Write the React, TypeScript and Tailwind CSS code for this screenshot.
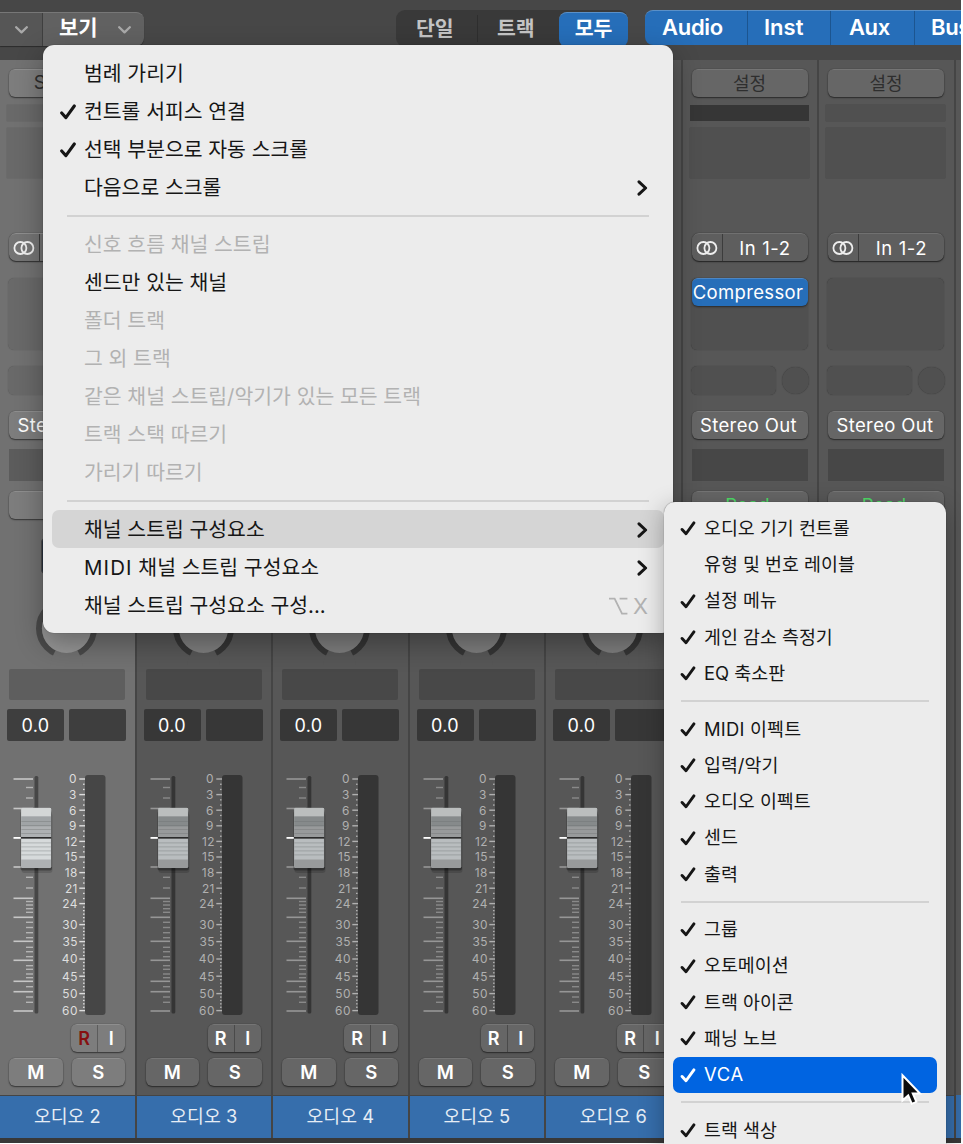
import React from "react";
import { clsx } from "clsx";

interface MenuEntry {
  label?: string;
  checked?: boolean;
  disabled?: boolean;
  submenu?: boolean;
  active?: boolean;
  shortcut?: string;
  separator?: boolean;
}

interface Channel {
  name: string;
  setting: string;
  selected?: boolean;
  gainActive?: boolean;
  plugin?: string;
}

const CHANNELS: Channel[] = [
  { name: "오디오 2", setting: "Setting", selected: true },
  { name: "오디오 3", setting: "설정" },
  { name: "오디오 4", setting: "설정" },
  { name: "오디오 5", setting: "설정" },
  { name: "오디오 6", setting: "설정" },
  { name: "오디오 7", setting: "설정", gainActive: true, plugin: "Compressor" },
  { name: "오디오 8", setting: "설정" },
];

const VIEW_MENU: MenuEntry[] = [
  { label: "범례 가리기" },
  { label: "컨트롤 서피스 연결", checked: true },
  { label: "선택 부분으로 자동 스크롤", checked: true },
  { label: "다음으로 스크롤", submenu: true },
  { separator: true },
  { label: "신호 흐름 채널 스트립", disabled: true },
  { label: "센드만 있는 채널" },
  { label: "폴더 트랙", disabled: true },
  { label: "그 외 트랙", disabled: true },
  { label: "같은 채널 스트립/악기가 있는 모든 트랙", disabled: true },
  { label: "트랙 스택 따르기", disabled: true },
  { label: "가리기 따르기", disabled: true },
  { separator: true },
  { label: "채널 스트립 구성요소", submenu: true, active: true },
  { label: "MIDI 채널 스트립 구성요소", submenu: true },
  { label: "채널 스트립 구성요소 구성...", shortcut: "X" },
];

const COMPONENT_MENU: MenuEntry[] = [
  { label: "오디오 기기 컨트롤", checked: true },
  { label: "유형 및 번호 레이블" },
  { label: "설정 메뉴", checked: true },
  { label: "게인 감소 측정기", checked: true },
  { label: "EQ 축소판", checked: true },
  { separator: true },
  { label: "MIDI 이펙트", checked: true },
  { label: "입력/악기", checked: true },
  { label: "오디오 이펙트", checked: true },
  { label: "센드", checked: true },
  { label: "출력", checked: true },
  { separator: true },
  { label: "그룹", checked: true },
  { label: "오토메이션", checked: true },
  { label: "트랙 아이콘", checked: true },
  { label: "패닝 노브", checked: true },
  { label: "VCA", checked: true, active: true },
  { separator: true },
  { label: "트랙 색상", checked: true },
];

// meter scale: [dB value, y]
const DB_MARKS: [number, number][] = [
  [0, 9], [3, 24.6], [6, 40.2], [9, 55.8], [12, 71.4], [15, 87], [18, 102.6], [21, 118.2],
  [24, 133.6], [30, 154.6], [35, 171.6], [40, 189], [45, 206.2], [50, 223.6], [60, 240.6],
];
const LONG_TICKS = [9, 38.5, 97, 128.3, 147.3, 171.3, 190.3, 211.3, 221.7, 241];
const SHORT_TICKS = [
  17.5, 28, 107.3, 118, 131.5, 135, 138.7, 142.3, 152.3, 157.5, 162.7, 167.7, 177.3, 181.7, 186.7,
  195.7, 199.3, 204, 207.7, 216.7, 227, 232.3,
];

function Check({ className }: { className: string }) {
  return (
    <svg viewBox="0 0 16 16" className={className} fill="none" stroke="currentColor">
      <path d="M1.7 9 5.9 13.6 14.3 2" strokeWidth="3.1" strokeLinecap="round" strokeLinejoin="round" />
    </svg>
  );
}

function ChevronDown() {
  return (
    <svg viewBox="0 0 13 8" className="h-2 w-[13px]" fill="none" stroke="#a9a9a9">
      <path d="M1.2 1.2 6.5 6.4 11.8 1.2" strokeWidth="2.3" strokeLinecap="round" strokeLinejoin="round" />
    </svg>
  );
}

function ViewMenu() {
  return (
    <div className="absolute left-[43px] top-[45px] w-[630px] rounded-[11px] bg-[#ececec] py-[9px] text-[20.45px] text-[#161616] shadow-[0_10px_28px_rgba(0,0,0,0.32),0_0_1px_rgba(0,0,0,0.6)]">
      {VIEW_MENU.map((item, i) =>
        item.separator ? (
          <div key={i} className="flex h-[19px] items-center pl-6 pr-6">
            <div className="h-[2px] w-full bg-[#d2d2d2]" />
          </div>
        ) : (
          <div
            key={i}
            className={clsx(
              "mx-[9px] flex h-[38px] items-center whitespace-nowrap rounded-[7px] pr-4",
              item.disabled && "text-[#b2b2b2]",
              item.active && "bg-[#d5d5d5]"
            )}
          >
            <div className="flex w-8 shrink-0 justify-center pt-0.5">
              {item.checked && <Check className="h-4 w-4" />}
            </div>
            <span className="flex-1 pt-[2px]">
              {item.label?.startsWith("MIDI") ? (
                <>
                  <span className="tracking-[1.1px]">MIDI</span>
                  {item.label.slice(4)}
                </>
              ) : (
                item.label
              )}
            </span>
            {item.submenu && (
              <svg viewBox="0 0 11 16" className="mt-px h-4 w-[11px]" fill="none" stroke="#161616">
                <path d="M2 1.8 8.6 8 2 14.2" strokeWidth="3" strokeLinecap="round" strokeLinejoin="round" />
              </svg>
            )}
            {item.shortcut && (
              <span className="flex items-center gap-[5px] pt-0.5 text-[#b2b2b2]">
                <svg viewBox="0 0 20 18" className="h-[18px] w-5" fill="none" stroke="currentColor" strokeWidth="1.8">
                  <path d="M1 1.6H6.6L14 16.6H19.4M11.6 1.6H19.4" />
                </svg>
                <span className="text-[22px]">{item.shortcut}</span>
              </span>
            )}
          </div>
        )
      )}
    </div>
  );
}

function ComponentMenu() {
  return (
    <div className="absolute left-[664px] top-[502px] h-[660px] w-[282px] rounded-[11px] bg-[#ececec] pt-2 text-[18.4px] text-[#161616] shadow-[0_6px_24px_rgba(0,0,0,0.3),0_0_1px_rgba(0,0,0,0.6)]">
      {COMPONENT_MENU.map((item, i) =>
        item.separator ? (
          <div key={i} className="flex h-[19.2px] items-center px-[17px]">
            <div className="h-[2px] w-full bg-[#d2d2d2]" />
          </div>
        ) : (
          <div
            key={i}
            className={clsx(
              "mx-[9px] flex h-[36.3px] items-center whitespace-nowrap rounded-[7px]",
              item.active && "bg-[#0064e1] text-white"
            )}
          >
            <div className="flex w-[31px] shrink-0 pl-[7px] pt-px">
              {item.checked && <Check className="h-[15px] w-4" />}
            </div>
            <span
              className={clsx(
                "pt-px",
                item.label === "VCA" && "tracking-[0.7px]",
                item.label?.startsWith("MIDI") && "tracking-[0.2px]"
              )}
            >
              {item.label}
            </span>
          </div>
        )
      )}
    </div>
  );
}

function Toolbar() {
  return (
    <div className="flex h-[60px] items-start bg-[#474747] pt-[10px] text-[22px] font-semibold text-white">
      <div className="mt-0.5 flex h-[34px] w-36 shrink-0 rounded-r-lg border-t border-[#777] bg-[#616161] shadow-[0_1px_1px_rgba(0,0,0,0.4)]">
        <div className="flex w-[43px] items-center justify-center border-r border-[#3f3f3f] bg-[#565656]">
          <ChevronDown />
        </div>
        <div className="flex flex-1 items-center justify-between pl-4 pr-[13px]">
          <span className="-mt-1 text-[21px]">보기</span>
          <ChevronDown />
        </div>
      </div>
      <div className="ml-[252px] flex h-[37px] w-[232px] shrink-0 items-center rounded-[9px] bg-[#393939] text-[20.5px] text-[#c4c4c4]">
        <div className="w-[82px] border-r border-[#2e2e2e] pl-5 leading-[27px]">단일</div>
        <div className="w-[81px] pl-[19px] leading-[27px]">트랙</div>
        <div className="mt-0.5 flex h-[35px] flex-1 items-center justify-center rounded-lg border-t border-[#5a90c8] bg-[#266eb9] pb-0.5 text-white">
          모두
        </div>
      </div>
      <div className="ml-[17px] flex h-[35px] shrink-0 overflow-hidden rounded-l-lg border-t border-[#5a90c8] bg-[#266eb9] text-[22px] leading-[32px]">
        <div className="w-[103px] border-r border-[#1c5590] pl-[17px] tracking-[-0.3px]">Audio</div>
        <div className="w-[83px] border-r border-[#1c5590] pl-4">Inst</div>
        <div className="w-[84px] border-r border-[#1c5590] pl-[18px] tracking-[-0.4px]">Aux</div>
        <div className="w-[60px] pl-[16px] tracking-[-0.3px]">Bus</div>
      </div>
    </div>
  );
}

function Fader({ selected }: { selected?: boolean }) {
  const slot = selected ? "#464646" : "#353535";
  const tick = selected ? "#c6c6c6" : "#969696";
  const label = selected ? "#dedede" : "#b0b0b0";
  return (
    <svg width="134" height="250" className="block shrink-0">
      {LONG_TICKS.map((y) => (
        <rect key={y} x="13.5" y={y - 0.8} width="19.5" height="1.6" fill={tick} />
      ))}
      {SHORT_TICKS.map((y) => (
        <rect key={y} x="26" y={y - 0.7} width="7" height="1.4" fill={tick} opacity="0.8" />
      ))}
      <rect x="34.5" y="6" width="3.8" height="237.5" rx="1.5" fill={slot} />
      <rect x="85" y="5" width="20.5" height="240" rx="3" fill={slot} />
      {DB_MARKS.map(([db, y], i) => {
        const next = DB_MARKS[i + 1];
        const steps = !next ? 0 : db < 24 ? 3 : db === 24 ? 6 : 5;
        return (
          <g key={db} fill={label}>
            <text
              x={db < 10 ? 76.8 : 77.8}
              y={y + 4.3}
              textAnchor="end"
              fontSize="11.9"
              letterSpacing="0.4"
            >
              {db}
            </text>
            <rect x="79.3" y={y - 0.7} width="5.7" height="1.4" />
            {Array.from({ length: Math.max(0, steps - 1) }, (_, k) => (
              <rect
                key={k}
                x="83"
                y={y + ((next[1] - y) * (k + 1)) / steps - 0.6}
                width="1.6"
                height="1.3"
              />
            ))}
          </g>
        );
      })}
      {/* fader cap */}
      <rect x="13.5" y="67" width="8" height="1.8" fill="#fff" />
      <rect x="20.5" y="41" width="31.5" height="59.5" rx="2" fill="#000" opacity="0.3" />
      <rect x="21.5" y="43" width="31" height="60" rx="3" fill="#000" opacity="0.14" />
      <rect x="21" y="37.7" width="30.3" height="60.3" rx="1.5" fill={selected ? "#aeb1b3" : "#989a9b"} />
      <rect x="21.3" y="38" width="29.6" height="8.5" fill={selected ? "#d3d6d6" : "#bbbebe"} />
      <rect x="21.3" y="46.5" width="29.6" height="10" fill={selected ? "#a0a4a6" : "#868a8b"} />
      <rect x="21.3" y="68.5" width="29.6" height="21" fill={selected ? "#d6dadb" : "#b9bdbf"} />
      {[51, 55, 59, 63, 72.5, 76.5, 80.5, 84.5].map((y) => (
        <rect key={y} x="21.3" y={y} width="29.6" height="0.8" fill="#6d7072" opacity="0.45" />
      ))}
      <rect x="21" y="67" width="30.3" height="1.6" fill="#2b2b2b" />
    </svg>
  );
}

function ChannelStrip({ channel }: { channel: Channel }) {
  const { selected } = channel;
  const button = clsx(
    "flex items-center justify-center rounded-[6px] border-t shadow-[0_1px_1.5px_rgba(0,0,0,0.5),0_0_1px_rgba(0,0,0,0.5)]",
    selected ? "border-[#8e8e8e] bg-[#7d7d7d]" : "border-[#757575] bg-[#666]"
  );
  const slot = selected ? "bg-[#696969] shadow-[0_0_1px_#505050]" : "bg-[#505050] shadow-[0_0_1px_#333]";
  const readout = clsx(
    "flex h-8 w-[57px] items-center justify-center rounded-[2px] text-[18px] tracking-[0.4px]",
    selected ? "bg-[#3e3e3e]" : "bg-[#373737]"
  );

  return (
    <div
      className={clsx(
        "flex w-[136.5px] shrink-0 flex-col border-r-2 border-[#454545] text-white",
        selected ? "bg-[#717171]" : "bg-[#575757]"
      )}
    >
      <div className="flex h-[572px] flex-col pl-[9px] pt-[9px]">
        <div className={clsx(button, "h-7 w-[116px] pb-px text-[18px] text-[#2e2e2e]", selected && "pr-1 text-[19px]")}>
          {channel.setting}
        </div>
        <div className={clsx("-ml-0.5 mt-2 h-[16px] w-[119px]", channel.gainActive ? "bg-[#363636]" : slot)} />
        <div className={clsx("-ml-0.5 mt-[7px] h-[50px] w-[119px]", slot)} />
        <div
          className={clsx(
            "mt-[55px] flex h-7 w-[116px] items-center rounded-[7px] border-t shadow-[0_1px_1.5px_rgba(0,0,0,0.6),0_0_1px_rgba(0,0,0,0.6)]",
            selected ? "border-[#8e8e8e] bg-[#747474]" : "border-[#707070] bg-[#5e5e5e]"
          )}
        >
          <div className="flex h-full w-[31px] shrink-0 items-center justify-center border-r border-[#3c3c3c]">
            <svg viewBox="0 0 22 14" className="h-3.5 w-[22px]" fill="none" stroke="#eee" strokeWidth="1.8">
              <circle cx="7.4" cy="7" r="6" />
              <circle cx="14.4" cy="7" r="6" />
            </svg>
          </div>
          <div className="flex-1 text-center text-[18.5px] leading-[26px] tracking-[0.6px]">In 1-2</div>
        </div>
        <div className={clsx("-ml-px mt-[17px] h-[72px] w-[117px] rounded-[6px]", slot)}>
          {channel.plugin && (
            <div className="ml-px flex h-7 w-[116px] items-center justify-center rounded-[6px] border-t border-[#4c86c4] bg-[#266eb9] pr-[3px] text-[18.5px] tracking-[0.35px] shadow-[0_1px_2px_rgba(0,0,0,0.5)]">
              {channel.plugin}
            </div>
          )}
        </div>
        <div className="-ml-px mt-4 flex gap-[6px]">
          <div className={clsx("h-[29px] w-[85px] rounded-[6px]", slot)} />
          <div className={clsx("mt-px h-[27px] w-[27px] rounded-full", slot)} />
        </div>
        <div className={clsx(button, "mt-4 h-7 w-[116px] pr-0.5 pt-px text-[18.5px] tracking-[0.35px]")}>
          Stereo Out
        </div>
        <div className={clsx("mt-[10px] h-8 w-[116px]", selected ? "bg-[#5c5c5c]" : "bg-[#474747]")} />
        <div className={clsx(button, "mt-[10px] h-7 w-[116px] pr-1 text-[18.5px] text-[#4fdc68]")}>
          {!selected && "Read"}
        </div>
        <div className="ml-8 mt-[19px] h-9 w-[50px] rounded-sm border border-[#4b4b4b] bg-[#2b3440]" />
      </div>
      <div className="h-[37px] overflow-visible">
        <svg width="134" height="74" viewBox="0 0 134 74" className="-mt-9 block">
          <circle cx="66.5" cy="32.3" r="27.5" fill="none" stroke={selected ? "#4a4a4a" : "#353535"} strokeWidth="6" />
          <path d="M66.5 32.3 51.5 62.6 50 70H83L81.5 62.6Z" fill={selected ? "#717171" : "#575757"} />
          <circle cx="66.5" cy="32.3" r="24.6" fill={selected ? "#969696" : "#7e7e7e"} />
        </svg>
      </div>
      <div className={clsx("ml-[9px] h-[31px] w-[116px] rounded-[2px]", selected ? "bg-[#5e5e5e]" : "bg-[#484848]")} />
      <div className="ml-[7px] mt-[9px] flex gap-[5px]">
        <div className={readout}>0.0</div>
        <div className={readout} />
      </div>
      <div className="mt-[29px] h-[254px]">
        <Fader selected={selected} />
      </div>
      <div className={clsx(button, "ml-[71px] h-7 w-[53.5px] text-[18px] font-semibold")}>
        <div
          className={clsx(
            "flex h-full w-[27px] items-center justify-center border-r",
            selected ? "border-[#5c5c5c] text-[#861010]" : "border-[#4a4a4a]"
          )}
        >
          R
        </div>
        <div className="flex-1 text-center">I</div>
      </div>
      <div className="ml-[9px] mt-1.5 flex gap-[9px] text-[18.5px] font-semibold">
        <div className={clsx(button, "h-7 w-[53.5px]")}>M</div>
        <div className={clsx(button, "h-7 w-[53.5px]")}>S</div>
      </div>
      <div className="mt-[9px] h-[43px] border-t border-[#454545] bg-[#366eac] text-center text-[18.3px] leading-[40px] text-[#e6edf5]">
        {channel.name}
      </div>
    </div>
  );
}

export default function App() {
  return (
    <div className="relative h-[1144px] w-[963px] overflow-hidden bg-white font-['Inter','Noto_Sans_CJK_KR',sans-serif]">
      <div className="h-[1143px] w-[961px] overflow-hidden bg-[#383838]">
        <Toolbar />
        <div className="flex h-[1078px]">
          {CHANNELS.map((channel) => (
            <ChannelStrip key={channel.name} channel={channel} />
          ))}
          <div className="flex flex-1 flex-col bg-[#575757]">
            <div className="mt-auto h-[43px] bg-[#366eac]" />
          </div>
        </div>
      </div>
      <ViewMenu />
      <ComponentMenu />
      <svg width="24" height="36" viewBox="0 0 24 36" className="absolute left-[899px] top-[1072px]">
        <path
          d="M3.5 3.2V28.5L9.2 23.4 12.8 31.8 17.4 29.8 13.8 21.6H21Z"
          fill="#0b0b0b"
          stroke="#fff"
          strokeWidth="2"
        />
      </svg>
    </div>
  );
}
